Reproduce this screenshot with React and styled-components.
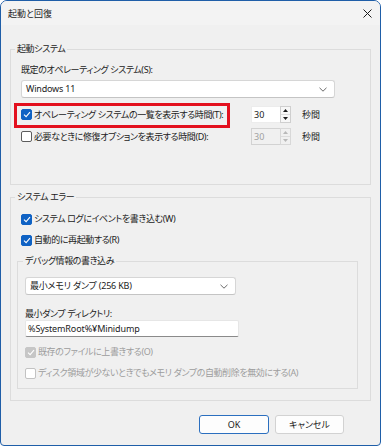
import React from 'react';
import styled, { createGlobalStyle, css } from 'styled-components';

const Global = createGlobalStyle`
  html, body { margin: 0; padding: 0; background: #ffffff; }
  *, *::before, *::after { box-sizing: border-box; }
`;

const Window = styled.div`
  width: 381px;
  height: 446px;
  border: 1px solid #1f5ea8;
  border-radius: 7px 7px 4px 4px;
  background: #f0f0f0;
  overflow: hidden;
  display: flex;
  flex-direction: column;
  font-family: "Noto Sans", "Noto Sans CJK JP", sans-serif;
  font-size: 9px;
  font-feature-settings: "palt";
  letter-spacing: -0.4px;
  white-space: nowrap;
  color: #1b1b1b;
`;

const TitleBar = styled.div`
  height: 24px;
  flex: none;
  background: #f3f3f3;
  display: flex;
  align-items: center;
  justify-content: space-between;
  padding: 1px 7px 0 7px;
  font-size: 9px;
  letter-spacing: 0;
`;

const CloseBtn = styled.div`
  width: 10px;
  height: 10px;
  display: flex;
  align-items: center;
  justify-content: center;
  margin-right: 1px;
`;

const Body = styled.div`
  flex: 1;
  display: flex;
  flex-direction: column;
  padding: 0 9px;
`;

const Group = styled.div`
  position: relative;
  border: 1px solid #dcdcdc;
  margin: ${p => p.$margin || '0'};
  padding: ${p => p.$padding || '0'};
  width: ${p => p.$w ? p.$w + 'px' : 'auto'};
  display: flex;
  flex-direction: column;
  align-items: flex-start;
`;

const Legend = styled.span`
  position: absolute;
  top: -7px;
  left: ${p => p.$left || 4}px;
  line-height: 12px;
  padding: 0 2px;
  background: #f0f0f0;
`;

const FieldLabel = styled.div`
  line-height: 12px;
  margin-top: ${p => p.$mt || 0}px;
`;

const Select = styled.div`
  width: ${p => p.$w}px;
  height: 18px;
  margin-top: ${p => p.$mt || 0}px;
  background: #ffffff;
  border: 1px solid #d6d6d6;
  border-bottom-color: #c4c4c4;
  border-radius: 3px;
  display: flex;
  align-items: center;
  justify-content: space-between;
  padding: 0 7px 0 4px;
  line-height: 12px;
  letter-spacing: -0.2px;
`;

const TextInput = styled.div`
  width: ${p => p.$w}px;
  height: 17px;
  background: #ffffff;
  border: 1px solid #e6e6e6;
  border-bottom-color: #8a8a8a;
  border-radius: 2px;
  display: flex;
  align-items: center;
  padding-left: 2px;
  line-height: 12px;
  letter-spacing: -0.1px;
`;

const Row = styled.div`
  display: flex;
  align-items: center;
  height: ${p => p.$h || 14}px;
  margin-top: ${p => p.$mt || 0}px;
`;

const CheckCell = styled.div`
  position: relative;
  width: ${p => p.$w ? p.$w + 'px' : 'auto'};
  height: 12px;
  flex: none;
  display: flex;
  align-items: center;
  gap: 2px;
  line-height: 12px;
  color: ${p => p.$disabled ? '#9d9d9d' : '#1b1b1b'};
  ${p => p.$highlight && css`
    &::after {
      content: '';
      position: absolute;
      left: -7px;
      top: -6px;
      width: 216px;
      height: 25px;
      border: 3px solid #e3101e;
      pointer-events: none;
    }
  `}
`;

const Box = styled.span`
  width: 11px;
  height: 11px;
  flex: none;
  border-radius: 2px;
  display: flex;
  align-items: center;
  justify-content: center;
  ${p => p.$checked
    ? css`background: ${p.$disabled ? '#c6c6c6' : '#0f62c4'}; border: 1px solid ${p.$disabled ? '#c6c6c6' : '#0f62c4'};`
    : css`background: #ffffff; border: 1px solid ${p.$disabled ? '#c2c2c2' : '#5c5c5c'};`}
`;

const Spinner = styled.div`
  display: flex;
  height: 17px;
  width: 40px;
  flex: none;
`;

const SpinInput = styled.div`
  width: 29px;
  height: 17px;
  background: ${p => p.$disabled ? '#f0f0f0' : '#ffffff'};
  border: 1px solid ${p => p.$disabled ? '#d2d2d2' : '#ececec'};
  border-right: none;
  display: flex;
  align-items: center;
  padding-left: 2px;
  letter-spacing: 0;
  color: ${p => p.$disabled ? '#a0a0a0' : '#1b1b1b'};
`;

const SpinButtons = styled.div`
  width: 11px;
  height: 17px;
  display: flex;
  flex-direction: column;
  border: 1px solid ${p => p.$disabled ? '#d8d8d8' : '#cfcfcf'};
  background: ${p => p.$disabled ? '#f0f0f0' : '#f7f7f7'};
`;

const SpinHalf = styled.div`
  flex: 1;
  display: flex;
  align-items: center;
  justify-content: center;
  & + & { border-top: 1px solid ${p => p.$disabled ? '#dcdcdc' : '#d4d4d4'}; }
`;

const Unit = styled.span`
  margin-left: 11px;
  line-height: 12px;
  letter-spacing: 0;
`;

const Buttons = styled.div`
  display: flex;
  justify-content: flex-end;
  gap: 6px;
  margin-top: 14px;
  padding-right: 27px;
`;

const Button = styled.div`
  width: ${p => p.$w}px;
  height: 19px;
  border-radius: 3px;
  background: #fdfdfd;
  border: 1px solid ${p => p.$primary ? '#2b6fbf' : '#d2d2d2'};
  display: flex;
  align-items: center;
  justify-content: center;
  line-height: 12px;
  letter-spacing: 0;
`;

const Chevron = () => (
  <svg width="8" height="5" viewBox="0 0 8 5">
    <path d="M0.5 0.8 L4 4.2 L7.5 0.8" fill="none" stroke="#6a6a6a" strokeWidth="1" />
  </svg>
);

const Tick = () => (
  <svg width="8" height="7" viewBox="0 0 8 7">
    <path d="M1 3.6 L3.1 5.6 L7 1.2" fill="none" stroke="#ffffff" strokeWidth="1.1" />
  </svg>
);

const Arrow = ({ up, color }) => (
  <svg width="5" height="3" viewBox="0 0 5 3">
    <path d={up ? 'M0 3 L2.5 0 L5 3 Z' : 'M0 0 L2.5 3 L5 0 Z'} fill={color} />
  </svg>
);

const Check = ({ checked, disabled, w, highlight, children }) => (
  <CheckCell $w={w} $disabled={disabled} $highlight={highlight}>
    <Box $checked={checked} $disabled={disabled}>{checked && <Tick />}</Box>
    <span>{children}</span>
  </CheckCell>
);

const Spin = ({ value, disabled }) => {
  const c = disabled ? '#b8b8b8' : '#1b1b1b';
  return (
    <Spinner>
      <SpinInput $disabled={disabled}>{value}</SpinInput>
      <SpinButtons $disabled={disabled}>
        <SpinHalf $disabled={disabled}><Arrow up color={c} /></SpinHalf>
        <SpinHalf $disabled={disabled}><Arrow color={c} /></SpinHalf>
      </SpinButtons>
    </Spinner>
  );
};

export default function App() {
  return (
    <>
      <Global />
      <Window>
        <TitleBar>
          <span>起動と回復</span>
          <CloseBtn>
            <svg width="9" height="9" viewBox="0 0 9 9">
              <path d="M0.5 0.5 L8.5 8.5 M8.5 0.5 L0.5 8.5" stroke="#1b1b1b" strokeWidth="1" />
            </svg>
          </CloseBtn>
        </TitleBar>
        <Body>
          <Group $margin="24px 0 0 0" $padding="14px 0 39px 10px">
            <Legend>起動システム</Legend>
            <FieldLabel>既定のオペレーティング システム(S):</FieldLabel>
            <Select $w={314} $mt={4}>
              <span>Windows 11</span>
              <Chevron />
            </Select>
            <Row $h={17} $mt={8}>
              <Check checked w={230} highlight>オペレーティング システムの一覧を表示する時間(T):</Check>
              <Spin value="30" />
              <Unit>秒間</Unit>
            </Row>
            <Row $h={17} $mt={5}>
              <Check w={230}>必要なときに修復オプションを表示する時間(D):</Check>
              <Spin value="30" disabled />
              <Unit>秒間</Unit>
            </Row>
          </Group>

          <Group $margin="12px 0 0 0" $padding="14px 0 11px 10px">
            <Legend>システム エラー</Legend>
            <Row>
              <Check checked>システム ログにイベントを書き込む(W)</Check>
            </Row>
            <Row $mt={7}>
              <Check checked>自動的に再起動する(R)</Check>
            </Row>
            <Group $margin="14px 0 0 -4px" $padding="15px 0 8px 7px" $w={341}>
              <Legend $left={5}>デバッグ情報の書き込み</Legend>
              <Select $w={211}>
                <span>最小メモリ ダンプ (256 KB)</span>
                <Chevron />
              </Select>
              <FieldLabel $mt={13}>最小ダンプ ディレクトリ:</FieldLabel>
              <TextInput $w={214}>%SystemRoot%¥Minidump</TextInput>
              <Row $mt={8}>
                <Check checked disabled>既存のファイルに上書きする(O)</Check>
              </Row>
              <Row $mt={7}>
                <Check disabled>ディスク領域が少ないときでもメモリ ダンプの自動削除を無効にする(A)</Check>
              </Row>
            </Group>
          </Group>

          <Buttons>
            <Button $w={70} $primary>OK</Button>
            <Button $w={69}>キャンセル</Button>
          </Buttons>
        </Body>
      </Window>
    </>
  );
}
